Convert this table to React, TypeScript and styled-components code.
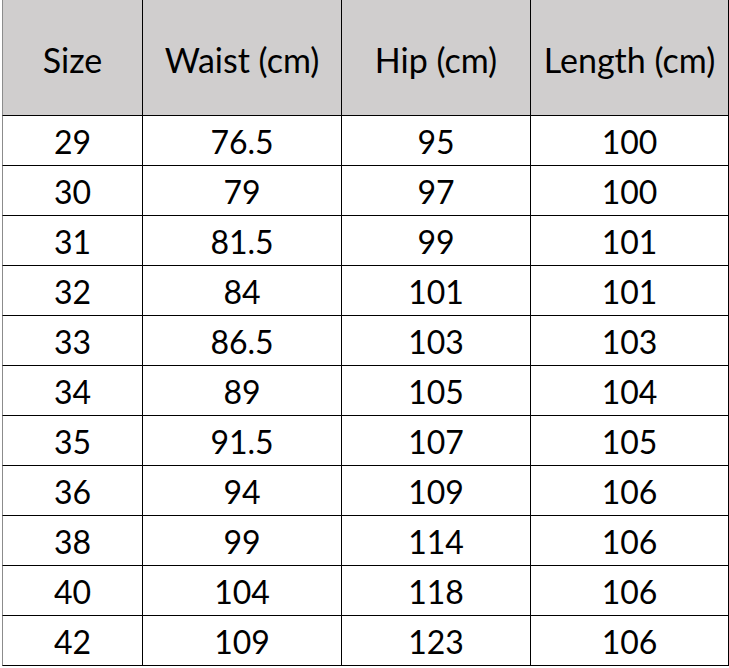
import styled, { createGlobalStyle } from 'styled-components'

const GlobalStyle = createGlobalStyle`
	html, body {
		margin: 0;
		padding: 0;
		background: #fff;
	}
`

const SizeGrid = styled.div`
	display: grid;
	grid-template-columns: 141px 199px 189px 198px;
	margin-left: 2px;
	width: 727px;
	font-family: Lato, 'Open Sans', sans-serif;
	color: #000;
`

const Cell = styled.div<{ $header?: boolean; $first?: boolean }>`
	box-sizing: border-box;
	height: ${(p) => (p.$header ? '116px' : '50px')};
	display: flex;
	align-items: center;
	justify-content: center;
	background: ${(p) => (p.$header ? '#d0cece' : '#fff')};
	border-right: 1px solid #000;
	border-bottom: 1px solid #000;
	border-left: ${(p) => (p.$first ? '1px solid #8c8c8c' : 'none')};
	font-size: ${(p) => (p.$header ? '34px' : '32px')};
	line-height: 1;
	padding-top: ${(p) => (p.$header ? '4px' : '2px')};
	white-space: nowrap;
`

const headers = ['Size', 'Waist (cm)', 'Hip (cm)', 'Length (cm)']

const rows: string[][] = [
	['29', '76.5', '95', '100'],
	['30', '79', '97', '100'],
	['31', '81.5', '99', '101'],
	['32', '84', '101', '101'],
	['33', '86.5', '103', '103'],
	['34', '89', '105', '104'],
	['35', '91.5', '107', '105'],
	['36', '94', '109', '106'],
	['38', '99', '114', '106'],
	['40', '104', '118', '106'],
	['42', '109', '123', '106'],
]

const App = () => {
	return (
		<>
			<GlobalStyle />
			<SizeGrid>
				{headers.map((h, i) => (
					<Cell key={h} $header $first={i === 0}>
						{h}
					</Cell>
				))}
				{rows.map((row) =>
					row.map((value, i) => (
						<Cell key={row[0] + '-' + i} $first={i === 0}>
							{value}
						</Cell>
					)),
				)}
			</SizeGrid>
		</>
	)
}

export default App
